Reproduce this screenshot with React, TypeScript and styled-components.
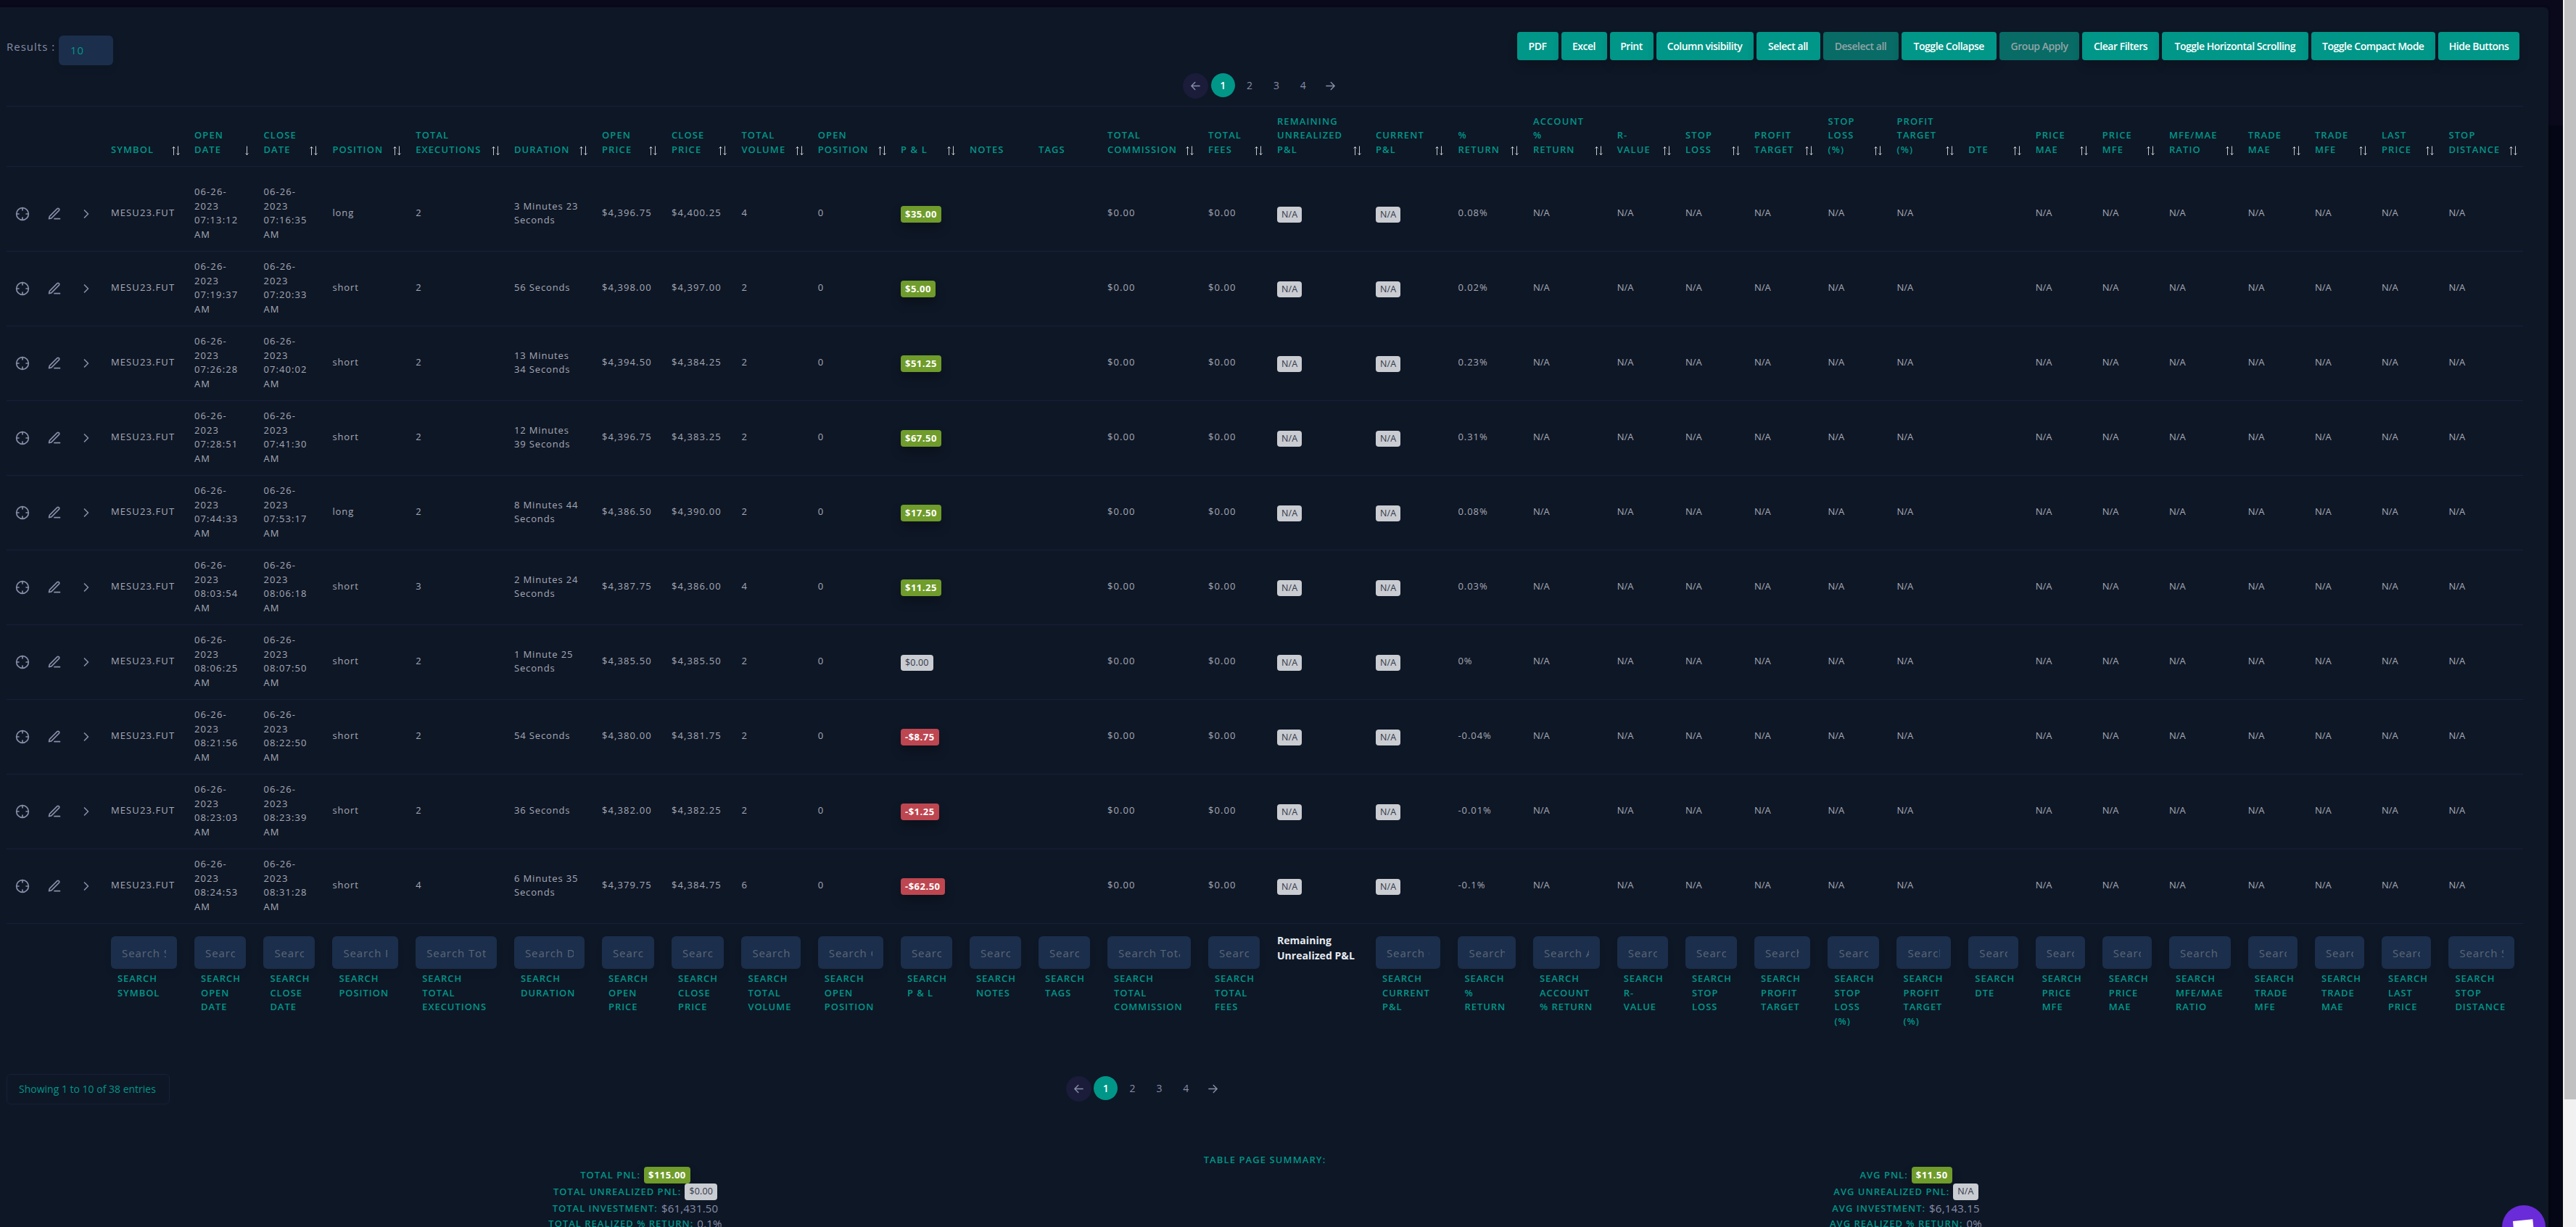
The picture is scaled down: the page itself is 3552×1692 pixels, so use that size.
import React from "react";
import styled, { createGlobalStyle, css } from "styled-components";

const FONT = `"Open Sans", "Noto Sans", sans-serif`;
const TEAL = "#009688";
const MUTED = "#888ea8";
const LINE = "#191e3a";

const GlobalStyle = createGlobalStyle`
  *, *::before, *::after { box-sizing: border-box; }
  html, body { margin: 0; padding: 0; background: #050716; }
  body { font-family: ${FONT}; font-size: 13px; line-height: 19.5px; color: #a6a9b5; overflow: hidden; }
`;

const Viewport = styled.div`
  display: flex;
  width: 3552px;
  height: 1692px;
  overflow: hidden;
`;

const Page = styled.main`
  flex: 1;
  height: 1692px;
  overflow: hidden;
  padding: 10px 20px 0 0;
  background: linear-gradient(#0a091b 173px, #040615 173px);
`;

const Card = styled.section`
  height: 1800px;
  padding: 0 35px 0 9px;
  background: #0e1726;
  border-top-right-radius: 6px;
  box-shadow: 0 0 3px rgba(0, 0, 0, 0.4);
`;

const ScrollTrack = styled.aside`
  width: 18px;
  padding-left: 2px;
  background: #f1f1f1;
`;

const ScrollThumb = styled.div`
  height: 1516px;
  background: #c1c1c1;
`;

const TopBar = styled.header`
  display: flex;
  justify-content: space-between;
  height: 91px;
  padding: 34px 5px 0 0;
`;

const LengthLabel = styled.label`
  display: flex;
  gap: 5px;
  font-size: 15px;
  font-weight: 500;
  line-height: 22px;
  letter-spacing: 1px;
  color: ${MUTED};
  padding-top: 5px;
  height: 46px;
`;

const LengthCaption = styled.span`
  width: 67px;
  padding-top: 4px;
  white-space: nowrap;
`;

const LengthSelect = styled.div`
  width: 75px;
  height: 41px;
  padding: 9px 16px;
  border-radius: 6px;
  background: #1b2e4b;
  color: ${TEAL};
  font-weight: 400;
  box-shadow: 0 6px 10px rgba(0, 0, 0, 0.08);
`;

const ButtonBar = styled.div`
  display: flex;
  gap: 4px;
`;

const ActionButton = styled.button<{ $w: number; $off?: boolean }>`
  width: ${(p) => p.$w}px;
  height: 39px;
  padding: 0;
  border: 0;
  border-radius: 4px;
  background: ${(p) => (p.$off ? "#086b65" : TEAL)};
  color: ${(p) => (p.$off ? "#92a3a6" : "#fff")};
  font: 600 14px ${FONT};
  letter-spacing: -0.48px;
  white-space: nowrap;
  box-shadow: ${(p) => (p.$off ? "none" : "0 8px 14px rgba(0, 0, 0, 0.14)")};
`;

const Pager = styled.nav`
  display: flex;
  justify-content: center;
  height: 35px;
  padding-right: 5px;
`;

const PageItem = styled.span<{ $kind?: "prev" | "active" | "next" }>`
  display: flex;
  align-items: center;
  justify-content: center;
  width: 33px;
  height: 33px;
  margin-right: 3.8px;
  border-radius: 50%;
  font-size: 14px;
  font-weight: 500;
  color: ${MUTED};
  ${(p) =>
    p.$kind === "prev" &&
    css`
      width: 35px;
      height: 35px;
      background: #1a1c3a;
    `}
  ${(p) =>
    p.$kind === "next" &&
    css`
      width: 35px;
      height: 35px;
      margin-right: 0;
    `}
  ${(p) =>
    p.$kind === "active" &&
    css`
      background: ${TEAL};
      color: #fff;
      font-weight: 600;
    `}
`;

const STARTS = [
  9, 53, 97, 141, 256, 351.4, 446.4, 561.2, 697, 818, 914, 1010.4, 1115.8, 1230, 1325, 1420, 1515, 1654, 1749, 1885,
  1998.5, 2102, 2217.7, 2312, 2407, 2508.5, 2603.5, 2702.4, 2794.7, 2886.8, 2979, 3087.8, 3180, 3272, 3364.5, 3479,
];
const TEMPLATE = STARTS.slice(1)
  .map((s, i) => `${(s - STARTS[i]).toFixed(1)}px`)
  .join(" ");

const Table = styled.div`
  width: 3470px;
  margin-top: 10px;
`;

const rowGrid = css`
  display: grid;
  grid-template-columns: ${TEMPLATE};
`;

const HeadRow = styled.div`
  ${rowGrid}
  height: 84px;
  margin-bottom: 14px;
  border-top: 1px solid ${LINE};
  border-bottom: 1px solid ${LINE};
`;

const HeadCell = styled.div`
  display: flex;
  align-items: flex-end;
  justify-content: space-between;
  padding: 0 7px 13px 12px;
  font-weight: 600;
  letter-spacing: 1.1px;
  color: ${TEAL};
  white-space: pre;
`;

const SortIcon = styled.svg`
  flex: none;
  width: 12px;
  height: 14px;
  margin: 0 0 1px -12px;
  stroke: #c4c6ca;
  fill: none;
`;

const BodyRow = styled.div`
  ${rowGrid}
  height: 103px;
  border-bottom: 1px solid ${LINE};
`;

const Cell = styled.div<{ $ls?: number }>`
  display: flex;
  align-items: center;
  padding: 0 0 2px 12px;
  font-weight: 500;
  letter-spacing: ${(p) => p.$ls ?? 1.1}px;
  white-space: pre;
`;

const IconCell = styled.div`
  display: flex;
  align-items: center;
  justify-content: center;
`;

const LineIcon = styled.svg<{ $size?: number }>`
  width: ${(p) => p.$size ?? 20}px;
  height: ${(p) => p.$size ?? 20}px;
  fill: none;
  stroke: ${MUTED};
  stroke-width: 2;
  stroke-linecap: round;
  stroke-linejoin: round;
`;

type Tone = "good" | "bad" | "flat";
const TONES: Record<Tone, string> = { good: "#6f9c2b", bad: "#be4650", flat: "#c9ccd1" };

const Badge = styled.span<{ $tone: Tone; $inline?: boolean }>`
  display: inline-block;
  height: ${(p) => (p.$tone === "flat" && !p.$inline ? 22 : 23)}px;
  margin-top: ${(p) => (p.$inline ? 0 : 3)}px;
  padding: 0 6px 0 6px;
  border-radius: 4px;
  background: ${(p) => TONES[p.$tone]};
  color: ${(p) => (p.$tone === "flat" ? "#33374a" : "#fff")};
  font-size: ${(p) => (p.$tone === "flat" ? 12.5 : 13)}px;
  font-weight: ${(p) => (p.$tone === "flat" ? 500 : 700)};
  line-height: 22px;
  letter-spacing: ${(p) => (p.$tone === "flat" ? 0.15 : 0.5)}px;
  box-shadow: ${(p) => (p.$tone === "flat" ? "none" : "0 8px 14px rgba(0, 0, 0, 0.25)")};
`;

const FootRow = styled.div`
  ${rowGrid}
  height: 207px;
  padding-top: 17px;
`;

const FootCell = styled.div`
  padding: 0 12px;
`;

const FilterInput = styled.input`
  display: block;
  width: 100%;
  height: 45px;
  padding: 0 15px;
  border: 0;
  border-radius: 6px;
  background: #1b2e4b;
  font: 400 15px ${FONT};
  letter-spacing: 0.9px;
  box-shadow: 0 6px 10px rgba(0, 0, 0, 0.08);
  &::placeholder {
    color: #5c6778;
    opacity: 1;
  }
`;

const FilterLabel = styled.div`
  margin: 4px -12px 0 9px;
  font-weight: 600;
  letter-spacing: 0.95px;
  color: ${TEAL};
  white-space: pre;
`;

const FootTitle = styled.div`
  margin-top: -5px;
  font-size: 14px;
  font-weight: 700;
  line-height: 21px;
  letter-spacing: 0.05px;
  color: #e6eaf0;
  white-space: pre;
`;

const FooterBar = styled.div`
  display: grid;
  grid-template-columns: 225px 1fr 225px;
  align-items: start;
  height: 109px;
`;

const InfoBox = styled.div`
  width: 225px;
  height: 42px;
  padding: 9px 16px;
  border: 1px solid ${LINE};
  border-radius: 6px;
  font-size: 14px;
  font-weight: 500;
  line-height: 21px;
  color: ${TEAL};
  white-space: nowrap;
`;

const LowerPager = styled.div`
  padding: 3px 323px 0 0;
`;

const SummaryTitle = styled.h6`
  margin: 0;
  height: 19px;
  font-size: 13px;
  font-weight: 600;
  line-height: 19px;
  letter-spacing: 1.1px;
  text-align: center;
  color: ${TEAL};
`;

const SummaryGrid = styled.div`
  display: grid;
  grid-template-columns: 1fr 1fr;
  margin: 0 -25px 0 -9px;
`;

const SummaryColumn = styled.div`
  display: flex;
  flex-direction: column;
  align-items: center;
`;

const SummaryLine = styled.div`
  display: flex;
  align-items: center;
  height: 23px;
  gap: 5px;
  white-space: nowrap;
  &:last-child {
    height: 18px;
    line-height: 18px;
  }
`;

const SummaryName = styled.span`
  font-weight: 600;
  letter-spacing: 1px;
  color: ${TEAL};
`;

const SummaryValue = styled.span`
  font-size: 15px;
  letter-spacing: 0.2px;
  color: ${MUTED};
`;

const ChatLauncher = styled.button`
  position: fixed;
  left: 3450px;
  top: 1662px;
  width: 60px;
  height: 60px;
  padding: 0;
  border: 0;
  border-radius: 50%;
  background: #6a2bd9;
  overflow: hidden;
  svg {
    display: block;
  }
`;

const BUTTONS: [string, number, boolean?][] = [
  ["PDF", 57],
  ["Excel", 63],
  ["Print", 60],
  ["Column visibility", 134],
  ["Select all", 88],
  ["Deselect all", 104, true],
  ["Toggle Collapse", 131.5],
  ["Group Apply", 110, true],
  ["Clear Filters", 106],
  ["Toggle Horizontal Scrolling", 201.5],
  ["Toggle Compact Mode", 171.5],
  ["Hide Buttons", 112],
];

type Column = { head: string; foot: string; hint: string; sort?: "both" | "down" | "none" };
const COLUMNS: Column[] = [
  { head: "SYMBOL", foot: "SYMBOL", hint: "Symbol" },
  { head: "OPEN\nDATE", foot: "OPEN\nDATE", hint: "Open Date", sort: "down" },
  { head: "CLOSE\nDATE", foot: "CLOSE\nDATE", hint: "Close Date" },
  { head: "POSITION", foot: "POSITION", hint: "Position" },
  { head: "TOTAL\nEXECUTIONS", foot: "TOTAL\nEXECUTIONS", hint: "Total Executions" },
  { head: "DURATION", foot: "DURATION", hint: "Duration" },
  { head: "OPEN\nPRICE", foot: "OPEN\nPRICE", hint: "Open Price" },
  { head: "CLOSE\nPRICE", foot: "CLOSE\nPRICE", hint: "Close Price" },
  { head: "TOTAL\nVOLUME", foot: "TOTAL\nVOLUME", hint: "Total Volume" },
  { head: "OPEN\nPOSITION", foot: "OPEN\nPOSITION", hint: "Open Position" },
  { head: "P & L", foot: "P & L", hint: "P & L" },
  { head: "NOTES", foot: "NOTES", hint: "Notes", sort: "none" },
  { head: "TAGS", foot: "TAGS", hint: "Tags", sort: "none" },
  { head: "TOTAL\nCOMMISSION", foot: "TOTAL\nCOMMISSION", hint: "Total Commission" },
  { head: "TOTAL\nFEES", foot: "TOTAL\nFEES", hint: "Total Fees" },
  { head: "REMAINING\nUNREALIZED\nP&L", foot: "", hint: "" },
  { head: "CURRENT\nP&L", foot: "CURRENT\nP&L", hint: "Current P&L" },
  { head: "%\nRETURN", foot: "%\nRETURN", hint: "% Return" },
  { head: "ACCOUNT\n%\nRETURN", foot: "ACCOUNT\n% RETURN", hint: "Account % Return" },
  { head: "R-\nVALUE", foot: "R-\nVALUE", hint: "R-Value" },
  { head: "STOP\nLOSS", foot: "STOP\nLOSS", hint: "Stop Loss" },
  { head: "PROFIT\nTARGET", foot: "PROFIT\nTARGET", hint: "Profit Target" },
  { head: "STOP\nLOSS\n(%)", foot: "STOP\nLOSS\n(%)", hint: "Stop Loss (%)" },
  { head: "PROFIT\nTARGET\n(%)", foot: "PROFIT\nTARGET\n(%)", hint: "Profit Target (%)" },
  { head: "DTE", foot: "DTE", hint: "DTE" },
  { head: "PRICE\nMAE", foot: "PRICE\nMFE", hint: "Price MFE" },
  { head: "PRICE\nMFE", foot: "PRICE\nMAE", hint: "Price MAE" },
  { head: "MFE/MAE\nRATIO", foot: "MFE/MAE\nRATIO", hint: "MFE/MAE Ratio" },
  { head: "TRADE\nMAE", foot: "TRADE\nMFE", hint: "Trade MFE" },
  { head: "TRADE\nMFE", foot: "TRADE\nMAE", hint: "Trade MAE" },
  { head: "LAST\nPRICE", foot: "LAST\nPRICE", hint: "Last Price" },
  { head: "STOP\nDISTANCE", foot: "STOP\nDISTANCE", hint: "Stop Distance" },
];

type Trade = [string, string, string, string, string, string, string, string, string, Tone, string];
const TRADES: Trade[] = [
  ["07:13:12", "07:16:35", "long", "2", "3 Minutes 23\nSeconds", "$4,396.75", "$4,400.25", "4", "$35.00", "good", "0.08%"],
  ["07:19:37", "07:20:33", "short", "2", "56 Seconds", "$4,398.00", "$4,397.00", "2", "$5.00", "good", "0.02%"],
  ["07:26:28", "07:40:02", "short", "2", "13 Minutes\n34 Seconds", "$4,394.50", "$4,384.25", "2", "$51.25", "good", "0.23%"],
  ["07:28:51", "07:41:30", "short", "2", "12 Minutes\n39 Seconds", "$4,396.75", "$4,383.25", "2", "$67.50", "good", "0.31%"],
  ["07:44:33", "07:53:17", "long", "2", "8 Minutes 44\nSeconds", "$4,386.50", "$4,390.00", "2", "$17.50", "good", "0.08%"],
  ["08:03:54", "08:06:18", "short", "3", "2 Minutes 24\nSeconds", "$4,387.75", "$4,386.00", "4", "$11.25", "good", "0.03%"],
  ["08:06:25", "08:07:50", "short", "2", "1 Minute 25\nSeconds", "$4,385.50", "$4,385.50", "2", "$0.00", "flat", "0%"],
  ["08:21:56", "08:22:50", "short", "2", "54 Seconds", "$4,380.00", "$4,381.75", "2", "-$8.75", "bad", "-0.04%"],
  ["08:23:03", "08:23:39", "short", "2", "36 Seconds", "$4,382.00", "$4,382.25", "2", "-$1.25", "bad", "-0.01%"],
  ["08:24:53", "08:31:28", "short", "4", "6 Minutes 35\nSeconds", "$4,379.75", "$4,384.75", "6", "-$62.50", "bad", "-0.1%"],
];

function Sort({ kind }: { kind: "both" | "down" | "none" }) {
  if (kind === "none") return null;
  return (
    <SortIcon viewBox="0 0 12 14">
      {kind === "both" && <path d="M2.5 13V1M0.5 3.5L2.5 1.5L4.5 3.5" />}
      <path d="M8.5 0.5V12.5M6.5 10.5L8.5 12.5L10.5 10.5" />
    </SortIcon>
  );
}

function Pages() {
  return (
    <Pager>
      <PageItem $kind="prev">
        <LineIcon viewBox="0 0 24 24" $size={17}>
          <path d="M20 12H4M11 19l-7-7 7-7" />
        </LineIcon>
      </PageItem>
      <PageItem $kind="active">1</PageItem>
      <PageItem>2</PageItem>
      <PageItem>3</PageItem>
      <PageItem>4</PageItem>
      <PageItem $kind="next">
        <LineIcon viewBox="0 0 24 24" $size={17}>
          <path d="M4 12h16M13 5l7 7-7 7" />
        </LineIcon>
      </PageItem>
    </Pager>
  );
}

function TradeRow({ trade }: { trade: Trade }) {
  const [open, close, side, execs, duration, openPrice, closePrice, volume, pnl, tone, ret] = trade;
  const na = (key: string) => (
    <Cell key={key} $ls={0}>
      N/A
    </Cell>
  );
  return (
    <BodyRow>
      <IconCell>
        <LineIcon viewBox="0 0 24 24">
          <circle cx="12" cy="12" r="10" />
          <path d="M22 12h-4M6 12H2M12 6V2M12 22v-4" />
        </LineIcon>
      </IconCell>
      <IconCell>
        <LineIcon viewBox="0 0 24 24">
          <path d="M12 20h9M16.5 3.5a2.121 2.121 0 0 1 3 3L7 19l-4 1 1-4L16.5 3.5z" />
        </LineIcon>
      </IconCell>
      <IconCell>
        <LineIcon viewBox="0 0 24 24">
          <path d="M9 18l6-6-6-6" />
        </LineIcon>
      </IconCell>
      <Cell>MESU23.FUT</Cell>
      <Cell>{`06-26-\n2023\n${open}\nAM`}</Cell>
      <Cell>{`06-26-\n2023\n${close}\nAM`}</Cell>
      <Cell $ls={0.9}>{side}</Cell>
      <Cell>{execs}</Cell>
      <Cell $ls={0.85}>{duration}</Cell>
      <Cell>{openPrice}</Cell>
      <Cell>{closePrice}</Cell>
      <Cell>{volume}</Cell>
      <Cell>0</Cell>
      <Cell>
        <Badge $tone={tone}>{pnl}</Badge>
      </Cell>
      <Cell />
      <Cell />
      <Cell>$0.00</Cell>
      <Cell>$0.00</Cell>
      <Cell>
        <Badge $tone="flat">N/A</Badge>
      </Cell>
      <Cell>
        <Badge $tone="flat">N/A</Badge>
      </Cell>
      <Cell $ls={0.95}>{ret}</Cell>
      {["acct", "r", "sl", "pt", "slp", "ptp"].map(na)}
      <Cell />
      {["pmae", "pmfe", "ratio", "tmae", "tmfe", "last", "dist"].map(na)}
    </BodyRow>
  );
}

function Summary({ prefix, pnl, unrealized, investment, ret }: Record<"prefix" | "pnl" | "unrealized" | "investment" | "ret", string>) {
  return (
    <SummaryColumn>
      <SummaryLine>
        <SummaryName>{prefix} PNL:</SummaryName>
        <Badge $tone="good" $inline>
          {pnl}
        </Badge>
      </SummaryLine>
      <SummaryLine>
        <SummaryName>{prefix} UNREALIZED PNL:</SummaryName>
        <Badge $tone="flat" $inline>
          {unrealized}
        </Badge>
      </SummaryLine>
      <SummaryLine>
        <SummaryName>{prefix} INVESTMENT:</SummaryName>
        <SummaryValue>{investment}</SummaryValue>
      </SummaryLine>
      <SummaryLine>
        <SummaryName>{prefix} REALIZED % RETURN:</SummaryName>
        <SummaryValue>{ret}</SummaryValue>
      </SummaryLine>
    </SummaryColumn>
  );
}

export default function App() {
  return (
    <>
      <GlobalStyle />
      <Viewport>
        <Page>
          <Card>
            <TopBar>
              <LengthLabel>
                <LengthCaption>Results :</LengthCaption>
                <LengthSelect>10</LengthSelect>
              </LengthLabel>
              <ButtonBar>
                {BUTTONS.map(([label, w, off]) => (
                  <ActionButton key={label} $w={w} $off={off}>
                    {label}
                  </ActionButton>
                ))}
              </ButtonBar>
            </TopBar>
            <Pages />
            <Table>
              <HeadRow>
                <span />
                <span />
                <span />
                {COLUMNS.map((c, i) => (
                  <HeadCell key={i}>
                    <span>{c.head}</span>
                    <Sort kind={c.sort ?? "both"} />
                  </HeadCell>
                ))}
              </HeadRow>
              {TRADES.map((t) => (
                <TradeRow key={t[0]} trade={t} />
              ))}
              <FootRow>
                <span />
                <span />
                <span />
                {COLUMNS.map((c, i) => (
                  <FootCell key={i}>
                    {c.foot ? (
                      <>
                        <FilterInput placeholder={`Search ${c.hint}`} readOnly />
                        <FilterLabel>{`SEARCH\n${c.foot}`}</FilterLabel>
                      </>
                    ) : (
                      <FootTitle>{"Remaining\nUnrealized P&L"}</FootTitle>
                    )}
                  </FootCell>
                ))}
              </FootRow>
            </Table>
            <FooterBar>
              <InfoBox>Showing 1 to 10 of 38 entries</InfoBox>
              <LowerPager>
                <Pages />
              </LowerPager>
            </FooterBar>
            <SummaryTitle>TABLE PAGE SUMMARY:</SummaryTitle>
            <SummaryGrid>
              <Summary prefix="TOTAL" pnl="$115.00" unrealized="$0.00" investment="$61,431.50" ret="0.1%" />
              <Summary prefix="AVG" pnl="$11.50" unrealized="N/A" investment="$6,143.15" ret="0%" />
            </SummaryGrid>
          </Card>
        </Page>
        <ScrollTrack>
          <ScrollThumb />
        </ScrollTrack>
      </Viewport>
      <ChatLauncher aria-label="Chat">
        <svg width="60" height="60" viewBox="0 0 60 60">
          <path d="M15 22L42.3 19.3L44.5 42L17 45Z" fill="#fff" />
        </svg>
      </ChatLauncher>
    </>
  );
}
